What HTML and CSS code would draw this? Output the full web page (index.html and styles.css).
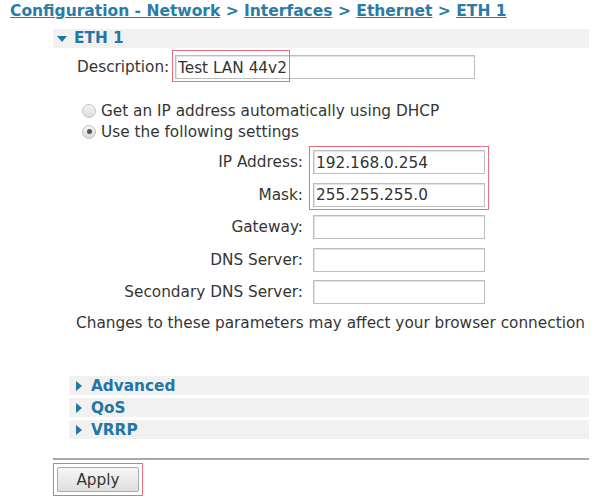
FILE: index.html
```html
<!DOCTYPE html>
<html>
<head>
<meta charset="utf-8">
<link rel="stylesheet" href="styles.css">
</head>
<body>
<div class="crumbs">
  <a href="#">Configuration - Network</a> &gt; <a href="#">Interfaces</a> &gt; <a href="#">Ethernet</a> &gt; <a href="#">ETH 1</a>
</div>
<div class="section">
  <div class="sec-head"><span class="tri-down"></span>ETH 1</div>
  <div class="desc-row">
    <label class="desc-label">Description:</label>
    <span class="hl-wrap">
      <input class="txt desc-input" type="text" value="Test LAN 44v2">
      <span class="hl hl-desc"></span>
    </span>
  </div>
  <div class="radios">
    <label class="radio-row"><span class="radio"></span>Get an IP address automatically using DHCP</label>
    <label class="radio-row"><span class="radio checked"></span>Use the following settings</label>
  </div>
  <div class="fields">
    <label class="flabel">IP Address:</label>
    <span class="hl-wrap"><input class="txt field" type="text" value="192.168.0.254"><span class="hl hl-ip"></span></span>
    <label class="flabel">Mask:</label>
    <input class="txt field" type="text" value="255.255.255.0">
    <label class="flabel">Gateway:</label>
    <input class="txt field" type="text" value="">
    <label class="flabel">DNS Server:</label>
    <input class="txt field" type="text" value="">
    <label class="flabel">Secondary DNS Server:</label>
    <input class="txt field" type="text" value="">
  </div>
  <p class="note">Changes to these parameters may affect your browser connection</p>
  <div class="subs">
    <div class="sub-head"><span class="tri-right"></span>Advanced</div>
    <div class="sub-head"><span class="tri-right"></span>QoS</div>
    <div class="sub-head"><span class="tri-right"></span>VRRP</div>
  </div>
  <div class="rule"></div>
  <div class="actions">
    <span class="hl-wrap"><button class="btn" type="button">Apply</button><span class="hl hl-btn"></span></span>
  </div>
</div>
</body>
</html>
```
FILE: styles.css
```css
html, body {
  margin: 0;
  padding: 0;
  background: #ffffff;
}
body {
  font-family: "DejaVu Sans", Verdana, sans-serif;
  font-size: 15.3px;
  color: #353535;
  width: 600px;
  height: 500px;
  overflow: hidden;
}
.crumbs {
  padding: 1px 0 0 10px;
  height: 29px;
  box-sizing: border-box;
  font-size: 15.5px;
  font-weight: bold;
  color: #2a7ba6;
  line-height: 20px;
  white-space: nowrap;
}
.crumbs a {
  color: #2a7ba6;
  text-decoration: underline;
}
.section {
  margin-left: 53px;
  width: 536px;
}
.sec-head {
  height: 19px;
  line-height: 19px;
  background: #f1f1f1;
  font-weight: bold;
  color: #2276a4;
  display: flex;
  align-items: center;
  padding-left: 4px;
}
.tri-down {
  width: 0;
  height: 0;
  border-left: 5px solid transparent;
  border-right: 5px solid transparent;
  border-top: 6px solid #2276a4;
  margin-right: 7px;
}
.desc-row {
  margin-top: 7px;
  padding-left: 24px;
  display: flex;
  align-items: center;
}
.desc-label {
  width: 98px;
}
.hl-wrap {
  position: relative;
  display: inline-block;
}
.txt {
  box-sizing: border-box;
  height: 24px;
  border: 1px solid #bdbdbd;
  box-shadow: inset 1px 1px 1px #e2e2e2;
  font-family: "DejaVu Sans", Verdana, sans-serif;
  font-size: 15.3px;
  color: #333;
  padding: 1px 2px 0 2px;
  margin: 0;
  background: #fff;
  display: block;
}
.desc-input {
  width: 300px;
}
.hl {
  position: absolute;
  border: 1px solid #e8707a;
  box-sizing: border-box;
  pointer-events: none;
}
.hl-desc {
  left: -3px;
  top: -5px;
  width: 118px;
  height: 32px;
}
.hl-ip {
  left: -4px;
  top: -4px;
  width: 180px;
  height: 64px;
}
.hl-btn {
  left: -4px;
  top: -4px;
  width: 90px;
  height: 33px;
}
.radios {
  margin-top: 21px;
  padding-left: 30px;
  display: flex;
  flex-direction: column;
}
.radio-row {
  height: 21px;
  display: flex;
  align-items: center;
}
.radio {
  width: 14px;
  height: 14px;
  box-sizing: border-box;
  border-radius: 50%;
  border: 1px solid #c4c4c4;
  background: linear-gradient(#f4f4f4, #dcdcdc);
  margin-right: 5px;
  margin-left: -1px;
  display: flex;
  align-items: center;
  justify-content: center;
}
.radio.checked::after {
  content: "";
  width: 5px;
  height: 5px;
  border-radius: 50%;
  background: #555;
}
.fields {
  margin-top: 8px;
  display: grid;
  grid-template-columns: 250px 172px;
  column-gap: 10px;
  grid-auto-rows: 24px;
  row-gap: 8.5px;
  align-items: center;
}
.flabel {
  text-align: right;
}
.field {
  width: 172px;
}
.note {
  margin: 9px 0 0 0;
  padding-left: 23px;
  line-height: 20px;
  white-space: nowrap;
}
.subs {
  margin-top: 43px;
  margin-left: 16px;
  display: flex;
  flex-direction: column;
  gap: 3px;
}
.sub-head {
  height: 19px;
  background: #f1f1f1;
  font-weight: bold;
  color: #2276a4;
  display: flex;
  align-items: center;
  padding-left: 7px;
}
.tri-right {
  width: 0;
  height: 0;
  border-top: 5px solid transparent;
  border-bottom: 5px solid transparent;
  border-left: 6px solid #2276a4;
  margin-right: 9px;
}
.rule {
  margin-top: 19px;
  height: 2px;
  background: #a9a9a9;
}
.actions {
  margin-top: 7px;
  padding-left: 4px;
}
.btn {
  display: block;
  box-sizing: border-box;
  width: 82px;
  height: 25px;
  border: 1px solid #aaaaaa;
  border-radius: 2px;
  background: linear-gradient(#f7f7f7, #dedede);
  font-family: "DejaVu Sans", Verdana, sans-serif;
  font-size: 15.3px;
  color: #333;
  padding: 0;
}
```
